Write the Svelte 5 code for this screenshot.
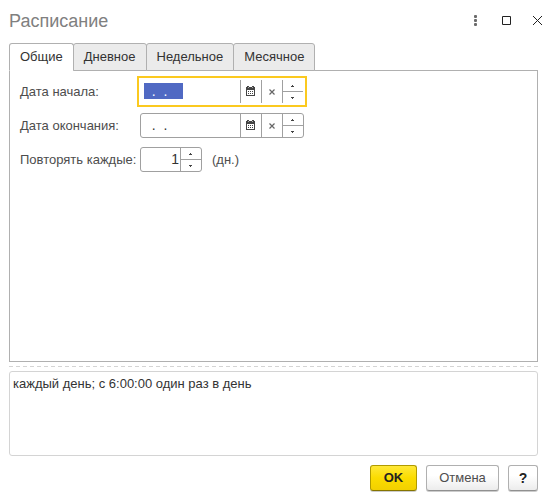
<script>
  import { onMount } from 'svelte';

  const tabs = ['Общие', 'Дневное', 'Недельное', 'Месячное'];
  const blank = '\u00a0\u00a0.\u00a0\u00a0.\u00a0\u00a0\u00a0\u00a0';

  let active = $state(0);
  let start = $state(blank);
  let end = $state(blank);
  let every = $state('1');
  let summary = $state('каждый день; с 6:00:00 один раз в день');
  let first;

  onMount(() => {
    first.focus();
    first.select();
  });

  function step(n) {
    every = String(Math.max(0, Number(every) + n));
  }
</script>

{#snippet spinner(up, down)}
  <span class="spin">
    <button type="button" aria-label="Увеличить" onclick={up}>
      <svg width="4" height="2" viewBox="0 0 4 2"><path d="M1 0h1v1h1v1H0V1h1z" fill="#444" /></svg>
    </button>
    <button type="button" aria-label="Уменьшить" onclick={down}>
      <svg width="4" height="2" viewBox="0 0 4 2"><path d="M0 0h3v1H2v1H1V1H0z" fill="#444" /></svg>
    </button>
  </span>
{/snippet}

{#snippet dateTools(clear)}
  <button type="button" class="tool" aria-label="Выбрать дату">
    <svg width="9" height="10" viewBox="0 0 9 10" shape-rendering="crispEdges">
      <path d="M0 1h1V0h2v1h3V0h2v1h1v9H0z" fill="#444" />
      <path d="M1 4h7v5H1z" fill="#fff" />
      <path d="M2 5h1v1H2zM4 5h1v1H4zM6 5h1v1H6zM2 7h1v1H2zM4 7h1v1H4zM6 7h1v1H6z" fill="#444" />
      <path d="M2 1h1v1H2zM6 1h1v1H6z" fill="#aaa" />
    </svg>
  </button>
  <button type="button" class="tool" aria-label="Очистить" onclick={clear}>
    <svg width="6" height="6" viewBox="0 0 6 6"><path d="M.5.5l5 5M5.5.5l-5 5" stroke="#666" stroke-width="1.2" /></svg>
  </button>
  {@render spinner()}
{/snippet}

<main>
  <header>
    <h1>Расписание</h1>
    <button type="button" aria-label="Ещё">
      <svg width="3" height="11" viewBox="0 0 3 11" fill="#6b6b6b"><rect width="3" height="3" rx="1" /><rect y="4" width="3" height="3" rx="1" /><rect y="8" width="3" height="3" rx="1" /></svg>
    </button>
    <button type="button" aria-label="Развернуть">
      <svg width="9" height="9" viewBox="0 0 9 9"><path d="M.5.5h8v8h-8z" fill="none" stroke="#222" /></svg>
    </button>
    <button type="button" aria-label="Закрыть">
      <svg width="9" height="9" viewBox="0 0 9 9"><path d="M0 0l9 9M9 0L0 9" stroke="#222" /></svg>
    </button>
  </header>

  <div class="tabs" role="tablist">
    {#each tabs as tab, i}
      <button type="button" role="tab" aria-selected={active === i} class:active={active === i} onclick={() => (active = i)}>{tab}</button>
    {/each}
  </div>

  <section class="panel" role="tabpanel">
    <label for="start">Дата начала:</label>
    <div class="field date">
      <input id="start" type="text" bind:this={first} bind:value={start} />
      {@render dateTools(() => (start = blank))}
    </div>
    <label for="end">Дата окончания:</label>
    <div class="field date">
      <input id="end" type="text" bind:value={end} />
      {@render dateTools(() => (end = blank))}
    </div>
    <label for="every">Повторять каждые:</label>
    <div class="repeat">
      <div class="field number">
        <input id="every" type="text" inputmode="numeric" bind:value={every} />
        {@render spinner(() => step(1), () => step(-1))}
      </div>
      <span>(дн.)</span>
    </div>
  </section>

  <div class="divider"></div>

  <textarea aria-label="Описание расписания" bind:value={summary}></textarea>

  <footer>
    <button type="button" class="ok">OK</button>
    <button type="button" class="cancel">Отмена</button>
    <button type="button" class="help" aria-label="Справка">?</button>
  </footer>
</main>

<style>
  :global(body) {
    margin: 0;
    background: #fff;
  }
  main {
    box-sizing: border-box;
    padding: 0 17px 6px 9px;
    font: 13px/16px "Liberation Sans", Arial, sans-serif;
    color: #333;
  }
  button,
  input,
  textarea {
    box-sizing: border-box;
    margin: 0;
    padding: 0;
    border: 0;
    background: none;
    font: inherit;
    color: inherit;
    outline: none;
  }
  svg {
    display: block;
  }
  header {
    display: flex;
    align-items: center;
    height: 43px;
    margin-right: -15px;
    box-sizing: border-box;
    padding-bottom: 2px;
  }
  h1 {
    flex: 1;
    margin: 0;
    font-size: 18px;
    line-height: 24px;
    font-weight: 400;
    color: #808080;
  }
  header button {
    display: flex;
    align-items: center;
    justify-content: center;
    width: 31px;
    height: 24px;
  }
  .tabs {
    display: flex;
    height: 28px;
    margin-bottom: -1px;
  }
  .tabs button {
    position: relative;
    padding: 0 10px;
    border: 1px solid #b0b0b0;
    border-radius: 3px 3px 0 0;
    background: #ebebeb;
  }
  .tabs button + button {
    margin-left: -1px;
  }
  .tabs button.active {
    background: #fff;
    border-bottom-color: #fff;
  }
  .panel {
    display: grid;
    grid-template-columns: 120px 1fr;
    gap: 9px 0;
    align-content: start;
    align-items: center;
    box-sizing: border-box;
    min-height: 292px;
    padding: 8px 10px;
    border: 1px solid #b0b0b0;
    color: #4d4d4d;
  }
  label {
    white-space: nowrap;
  }
  .field {
    display: flex;
    box-sizing: border-box;
    height: 25px;
    border: 1px solid #a0a0a0;
    border-radius: 3px;
    font-size: 14px;
    color: #333;
  }
  .date {
    width: 164px;
  }
  .number {
    width: 62px;
  }
  .field:focus-within {
    border-color: #fff;
    border-radius: 0;
    outline: 2px solid #fbc91f;
    outline-offset: 1px;
  }
  .field input {
    flex: 1;
    min-width: 0;
    padding: 0 3px 1px;
  }
  .number input {
    padding: 0 1px 1px;
    text-align: right;
  }
  input::selection {
    background: #5069c3;
    color: #fff;
  }
  .tool {
    display: flex;
    align-items: center;
    justify-content: center;
    width: 21px;
    padding: 0 2px 2px 0;
    border-left: 1px solid #a0a0a0;
  }
  .tool + .tool {
    padding: 0;
  }
  .spin {
    display: flex;
    flex-direction: column;
    width: 21px;
    box-sizing: border-box;
    border-left: 1px solid #a0a0a0;
  }
  .spin button {
    display: flex;
    flex: 1;
    align-items: center;
    justify-content: center;
  }
  .spin button + button {
    border-top: 1px solid #a0a0a0;
  }
  .repeat {
    display: flex;
    align-items: center;
    gap: 10px;
  }
  .divider {
    height: 1px;
    margin: 4px 0;
    background: repeating-linear-gradient(90deg, #d4d4d4 0 4px, transparent 4px 7px);
  }
  textarea {
    display: block;
    width: 100%;
    height: 85px;
    padding: 4px 3px;
    border: 1px solid #d4d4d4;
    border-radius: 3px;
    resize: none;
  }
  footer {
    display: flex;
    justify-content: flex-end;
    gap: 9px;
    margin-top: 9px;
  }
  footer button {
    height: 26px;
    border: 1px solid #b0b0b0;
    border-bottom-color: #909090;
    border-radius: 3px;
    background: linear-gradient(#fff 40%, #ececec);
    box-shadow: 0 1px 0 #ccc;
  }
  .ok {
    width: 47px;
    border-color: #b09a00;
    border-bottom-color: #857400;
    background: linear-gradient(#ffe838, #fbdc00 50%, #f2d000);
    font-weight: 700;
    color: #222;
  }
  .cancel {
    width: 73px;
    color: #4d4d4d;
  }
  .help {
    width: 30px;
    font-size: 14px;
    font-weight: 700;
    color: #222;
  }
</style>
